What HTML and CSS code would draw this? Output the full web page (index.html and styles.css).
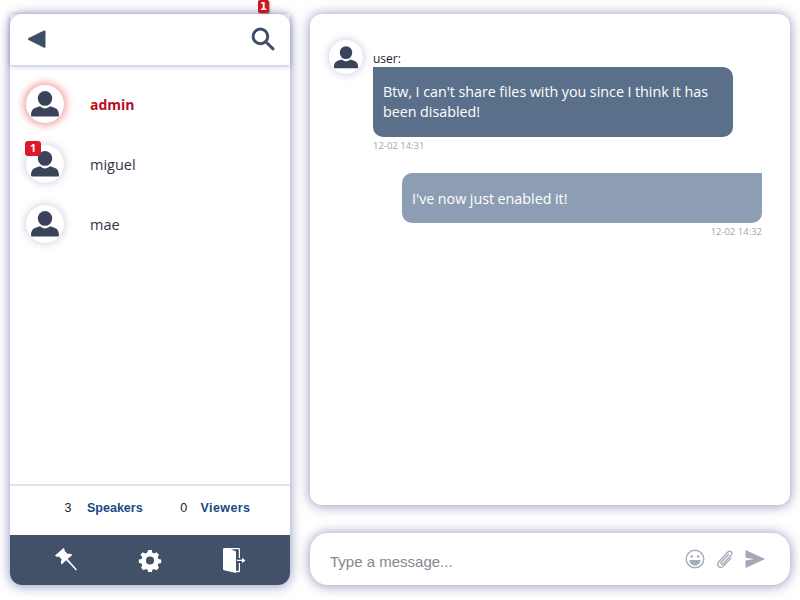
FILE: index.html
```html
<!DOCTYPE html>
<html lang="en">
<head>
<meta charset="utf-8">
<title>Chat</title>
<link rel="stylesheet" href="styles.css">
</head>
<body>
<svg class="defs" width="0" height="0" aria-hidden="true">
  <symbol id="user" viewBox="0 0 30 26">
    <ellipse cx="15" cy="7.4" rx="7.2" ry="7.4"/>
    <path d="M1 24.600c0-4.600 1.400-6.800 4.600-7.900 2-.7 3.600-1 4.600-1.400 1.400 1.400 3 2.100 4.800 2.100s3.400-.7 4.800-2.100c1 .4 2.600.7 4.600 1.400 3.200 1.100 4.600 3.300 4.600 7.900 0 .6-.4.900-1 .900H2c-.6 0-1-.3-1-.9z"/>
  </symbol>
</svg>
<div class="app">
  <aside class="side">
    <header class="side-head">
      <button class="icon-btn" type="button" aria-label="Back">
        <svg width="20" height="20" viewBox="0 0 20 20"><path class="arrow" d="M2 10 17.500 2.500V17.800z"/></svg>
      </button>
      <button class="icon-btn search" type="button" aria-label="Search">
        <span class="badge-top">1</span>
        <svg width="24" height="24" viewBox="0 0 24 24"><circle class="stroke-navy" cx="9.400" cy="9.400" r="7.300"/><path class="stroke-navy" d="m15 15 7 6.800"/></svg>
      </button>
    </header>
    <ul class="users">
      <li class="user active">
        <span class="avatar"><svg width="30" height="26"><use href="#user"/></svg></span>
        <span class="name">admin</span>
      </li>
      <li class="user">
        <span class="avatar"><span class="badge">1</span><svg width="30" height="26"><use href="#user"/></svg></span>
        <span class="name">miguel</span>
      </li>
      <li class="user">
        <span class="avatar"><svg width="30" height="26"><use href="#user"/></svg></span>
        <span class="name">mae</span>
      </li>
    </ul>
    <div class="stats">
      <span class="count">3</span><span class="label">Speakers</span>
      <span class="count second">0</span><span class="label">Viewers</span>
    </div>
    <footer class="toolbar">
      <svg width="26" height="26" viewBox="0 0 26 26"><path class="fill-white" d="M10.500 1 2 8.500c1 1.300 2.700 1.500 4 1l2.800 3.300c-1.300 1.600-1.300 3.400-.2 4.700l4.700-4.200 9.700 10.200 1-.9-9.300-10.600 4.600-4.100c-1.100-1.300-3-1.600-4.700-.8L11.600 3.800c.3-1 0-2-1.100-2.800z"/></svg>
      <svg width="24" height="24" viewBox="0 0 24 24"><path class="fill-white" fill-rule="evenodd" d="M10 1h4l.6 3c.7.2 1.300.5 1.900.9l2.700-1.500 2.800 2.800-1.500 2.700c.4.600.7 1.200.9 1.900l3 .6v4l-3 .6c-.2.700-.5 1.300-.9 1.900l1.500 2.700-2.800 2.800-2.700-1.500c-.6.400-1.200.7-1.900.9l-.6 3h-4l-.6-3c-.7-.2-1.300-.5-1.900-.9l-2.700 1.500-2.800-2.800 1.500-2.700c-.4-.6-.7-1.200-.9-1.900l-3-.6v-4l3-.6c.2-.7.500-1.300.9-1.900L1.300 6.200l2.800-2.800 2.700 1.500c.6-.4 1.200-.7 1.900-.9zm2 7a4.500 4.500 0 1 0 0 9 4.500 4.500 0 0 0 0-9z" transform="translate(1.200 1.200) scale(.9)"/></svg>
      <svg width="24" height="26" viewBox="0 0 24 26"><path class="fill-white" d="M1 2.500C1 1.500 1.500 1 2.500 1h14c1 0 1.500.5 1.500 1.500V11h-1.200V2.300H9L14 4.500V23.700h2.800V16H18v8c0 .8-.5 1.200-1.200 1.200H14v.8L2 23.200c-.6-.2-1-.7-1-1.400z"/><path class="fill-white" d="M15 12.700h5V10.700l3.500 2.700-3.500 2.700V14.100h-5z"/></svg>
    </footer>
  </aside>
  <main class="main">
    <section class="chat">
      <div class="msg incoming">
        <span class="avatar small"><svg width="26" height="23"><use href="#user"/></svg></span>
        <div class="msg-body">
          <div class="author">user:</div>
          <div class="bubble dark">Btw, I can't share files with you since I think it has been disabled!</div>
          <div class="time">12-02 14:31</div>
        </div>
      </div>
      <div class="msg outgoing">
        <div class="msg-body">
          <div class="bubble light">I've now just enabled it!</div>
          <div class="time">12-02 14:32</div>
        </div>
      </div>
    </section>
    <form class="composer">
      <span class="placeholder">Type a message...</span>
      <svg class="c-ico" width="20" height="20" viewBox="0 0 20 20"><circle class="stroke-grey" cx="10" cy="10" r="8.800"/><circle class="fill-grey" cx="6.800" cy="7.500" r="1.300"/><circle class="fill-grey" cx="13.200" cy="7.500" r="1.300"/><path class="fill-grey" d="M4.500 11h11c0 3-2.200 5.500-5.500 5.500S4.500 14 4.500 11z"/></svg>
      <svg class="c-ico" width="20" height="20" viewBox="0 0 20 20"><path class="stroke-clip" d="M13.500 5.500 6.300 13.300c-1 1.200.6 2.700 1.800 1.600l8.100-8.800c2-2.300-1.200-5.300-3.300-3.100L3.700 12.900c-3 3.300 1.500 7.500 4.500 4.400l7.600-8.100"/></svg>
      <svg class="c-ico send" width="20" height="20" viewBox="0 0 20 20"><path class="fill-send" d="M.5 1 20 10 .5 19V11.500L9 10 .5 8.800z"/></svg>
    </form>
  </main>
</div>
</body>
</html>
```
FILE: styles.css
```css
* { box-sizing: border-box; }
html, body { margin: 0; height: 100%; }
body {
  background: #fff;
  font-family: "Open Sans", "Noto Sans", sans-serif;
  color: #2b3242;
  overflow: hidden;
}
.defs { position: absolute; }
.app {
  display: flex;
  gap: 20px;
  height: 600px;
  padding: 14px 10px 15px;
}
.side, .chat, .composer {
  background: #fff;
  box-shadow: 0 0 12px rgba(70, 78, 150, .5), 0 3px 12px rgba(70, 78, 150, .16);
}
.side {
  width: 280px;
  display: flex;
  flex-direction: column;
  border-radius: 12px;
}
.side-head {
  height: 51px;
  flex: none;
  display: flex;
  align-items: center;
  justify-content: space-between;
  padding: 0 15px 2px 17px;
  box-shadow: 0 1px 5px rgba(80, 88, 160, .45);
  position: relative;
}
.icon-btn {
  position: relative;
  display: flex;
  border: 0;
  padding: 0;
  background: none;
}
.badge-top {
  position: absolute;
  left: 7px;
  top: -27px;
  width: 11px;
  height: 13px;
  border-radius: 2px;
  background: #d0121f;
  box-shadow: 1px 1px 2px rgba(0, 0, 0, .35);
  color: #fff;
  font: 700 10px/13px "DejaVu Sans", sans-serif;
  text-align: center;
}
.arrow { fill: #3f4e68; stroke: #3f4e68; stroke-width: 2; stroke-linejoin: round; }
.stroke-navy { fill: none; stroke: #3f4e68; stroke-width: 3; stroke-linecap: round; }
.fill-white { fill: #fff; }
.fill-grey { fill: #a7adb9; }
.fill-send { fill: #a3a9b6; }
.stroke-grey { fill: none; stroke: #a7adb9; stroke-width: 1.500; }
.stroke-clip { fill: none; stroke: #a7adb9; stroke-width: 1.400; stroke-linecap: round; }
.users {
  list-style: none;
  margin: 0;
  padding: 9px 0 0;
  flex: 1;
}
.user {
  height: 60px;
  display: flex;
  align-items: center;
  padding-left: 16px;
  gap: 26px;
}
.avatar {
  position: relative;
  flex: none;
  width: 38px;
  height: 38px;
  border-radius: 50%;
  background: #fff;
  display: flex;
  align-items: center;
  justify-content: center;
  box-shadow: 0 0 9px rgba(70, 78, 150, .32);
  fill: #3a4359;
}
.user.active .avatar { box-shadow: 0 0 7px 3px rgba(235, 100, 100, .55); }
.name { font-size: 14.500px; line-height: 20px; padding-top: 2px; color: #2f3544; }
.active .name { color: #b70f22; font-weight: 700; font-size: 14px; }
.badge {
  position: absolute;
  left: -1px;
  top: -4px;
  width: 16px;
  height: 15px;
  border-radius: 3px;
  background: #dc1a2a;
  color: #fff;
  font: 700 10px/15px "Open Sans", sans-serif;
  text-align: center;
}
.stats {
  flex: none;
  height: 51px;
  border-top: 2px solid #e0e2ee;
  display: flex;
  align-items: center;
  padding: 0 0 6px 48px;
  font: 700 12.500px/16px "Liberation Sans", sans-serif;
}
.count { font-weight: 400; color: #20242e; width: 20px; text-align: center; }
.count.second { margin-left: 31px; }
.label { color: #194a85; margin-left: 9px; }
.second + .label { margin-left: 7px; letter-spacing: .4px; }
.toolbar {
  flex: none;
  height: 50px;
  display: grid;
  grid-template-columns: repeat(3, 84px);
  justify-content: center;
  justify-items: center;
  align-items: center;
  background: #425068;
  border-radius: 0 0 12px 12px;
}
.main {
  flex: 1;
  display: flex;
  flex-direction: column;
  gap: 28px;
}
.chat {
  flex: none;
  height: 491px;
  border-radius: 12px;
  padding: 26px 28px 0 19px;
}
.msg { display: flex; }
.msg.outgoing { justify-content: flex-end; margin-top: 21px; }
.incoming { gap: 10px; }
.avatar.small { width: 34px; height: 34px; }
.msg-body { width: 360px; }
.author { font-size: 12px; line-height: 15px; padding-top: 11px; color: #20242e; height: 27px; }
.bubble {
  color: #fff;
  font-size: 14.300px;
  line-height: 20px;
  word-spacing: -.2px;
  padding: 15px 10px;
}
.dark { background: #5a6f8a; border-radius: 0 10px 10px 10px; height: 70px; }
.light { background: #8d9db3; border-radius: 10px 0 10px 10px; height: 50px; padding-top: 16px; }
.time { font-size: 9.500px; line-height: 13px; margin-top: 2px; color: #a4a6af; }
.outgoing .time { text-align: right; }
.composer {
  flex: 1;
  display: flex;
  align-items: center;
  gap: 10px;
  padding: 0 25px 0 20px;
  border-radius: 18px;
}
.placeholder {
  flex: 1;
  font: 400 15px/20px "Liberation Sans", sans-serif;
  color: #85878f;
  padding-top: 5px;
}
```
